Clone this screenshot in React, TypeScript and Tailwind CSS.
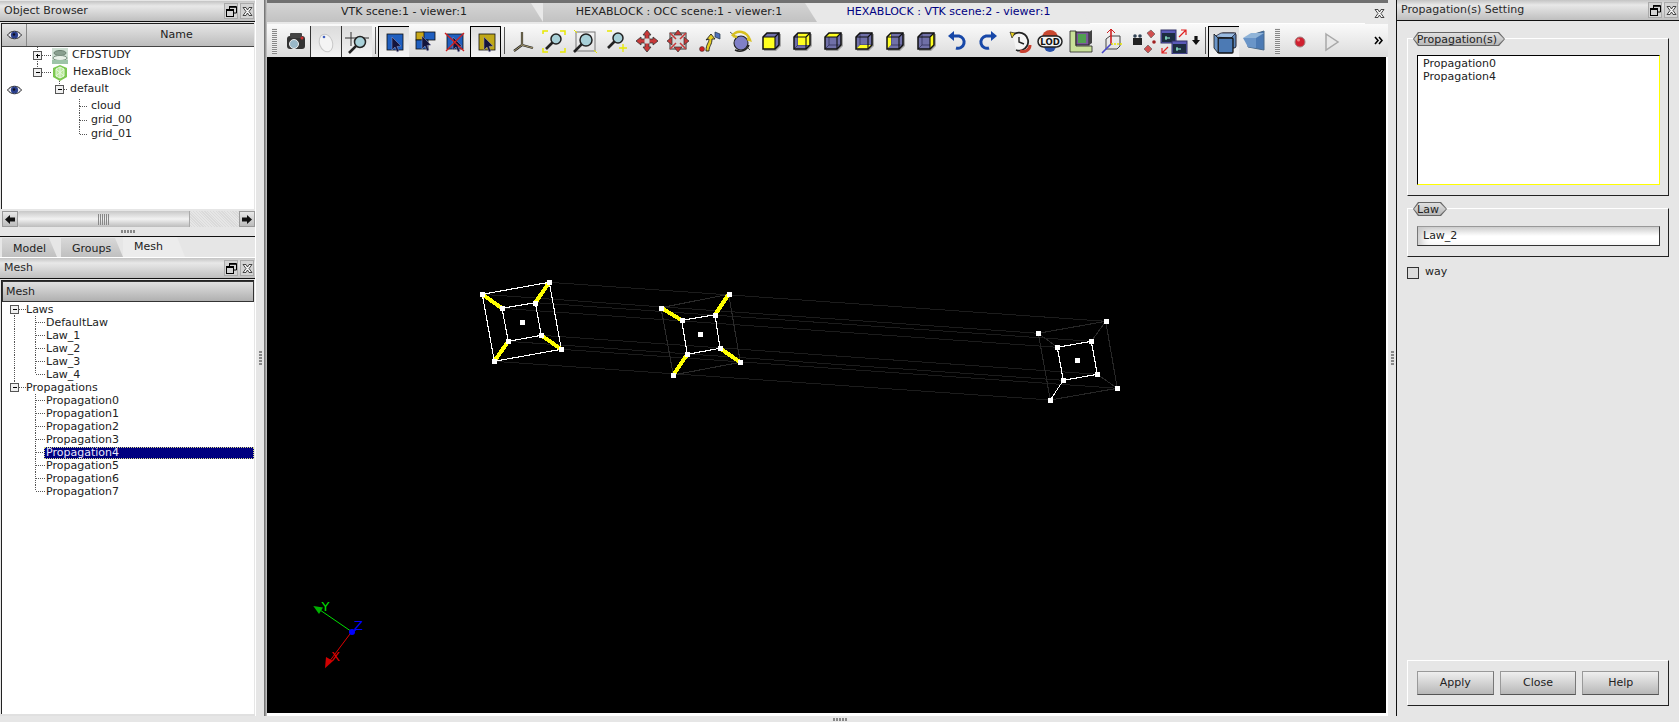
import React from "react";

const hex = "[clip-path:polygon(5px_0,calc(100%-6px)_0,100%_50%,calc(100%-6px)_100%,5px_100%,0_50%)]";

function I({ children, w = 26, h = 26 }: { children: React.ReactNode; w?: number; h?: number }) {
  return <svg width={w} height={h} viewBox={`0 0 ${w} ${h}`} className="block shrink-0">{children}</svg>;
}

const Cursor = ({ x = 11, y = 8 }: { x?: number; y?: number }) => (
  <path transform={`translate(${x} ${y})`} d="M0 0 L0 13 L3 10 L5 15 L7 14 L5 9.5 L9 9 Z" fill="#14143c" stroke="#9a9ac0" strokeWidth="0.5" />
);

const Mag = ({ x = 15, y = 10, r = 5 }: { x?: number; y?: number; r?: number }) => (
  <g>
    <line x1={x - r * 0.7} y1={y + r * 0.7} x2={x - r * 2} y2={y + r * 2} stroke="#222" strokeWidth="2.6" />
    <circle cx={x} cy={y} r={r} fill="#a8d0d8" stroke="#222" strokeWidth="1.5" />
  </g>
);

function Cube({ face }: { face: string }) {
  const Y = "#ffff20";
  const polys: Record<string, string> = {
    back: "M9 5 H21 V17 H9 Z",
    top: "M5 9 L9 5 H21 L17 9 Z",
    bottom: "M5 21 L9 17 H21 L17 21 Z",
    left: "M5 9 L9 5 V17 L5 21 Z",
    right: "M17 9 L21 5 V17 L17 21 Z",
    front: "M5 9 H17 V21 H5 Z",
  };
  return (
    <I>
      <path d="M10 6 H23 V18 L18 23 H6 V11 Z" fill="#555" opacity="0.45" />
      <path d="M5 9 L9 5 H21 V17 L17 21 H5 Z" fill="#7070a8" />
      {face !== "front" && <path d="M9 5 V17 H21 M9 17 L5 21" fill="none" stroke="#2a2a50" strokeWidth="0.7" />}
      <path d={polys[face]} fill={Y} />
      <path d="M5 9 H17 V21 M17 9 L21 5" fill="none" stroke="#111" strokeWidth="1.1" />
      <path d="M5 9 L9 5 H21 V17 L17 21 H5 Z" fill="none" stroke="#111" strokeWidth="1.5" />
    </I>
  );
}

const icons: Record<string, React.ReactNode> = {
  camera: (
    <I>
      <rect x="4" y="8" width="18" height="13" rx="3" fill="#333" />
      <rect x="7" y="5" width="12" height="5" rx="1" fill="#444" />
      <circle cx="11" cy="16" r="4.5" fill="#9ab8c8" stroke="#eee" />
      <circle cx="19" cy="10" r="1.5" fill="#d03030" />
    </I>
  ),
  mouse: (
    <I>
      <ellipse cx="13" cy="14" rx="6.5" ry="9" transform="rotate(-20 13 14)" fill="#f4f4f4" stroke="#c8c8c8" />
      <circle cx="11" cy="8" r="1.3" fill="#4060c0" />
    </I>
  ),
  axisZoom: (
    <I w={30}>
      <line x1="3" y1="9" x2="27" y2="9" stroke="#333" />
      <line x1="9" y1="3" x2="9" y2="17" stroke="#333" />
      <Mag x={18} y={13} r={5.5} />
    </I>
  ),
  sel: (
    <I>
      <rect x="6" y="5" width="16" height="16" fill="#1f5fc0" stroke="#111" strokeWidth="0.8" />
      <Cursor x={11} y={8} />
    </I>
  ),
  selMulti: (
    <I>
      <rect x="12" y="4" width="12" height="8" fill="#1f5fc0" stroke="#111" strokeWidth="0.8" />
      <rect x="5" y="4" width="8" height="8" fill="#c8a818" stroke="#111" strokeWidth="0.8" />
      <rect x="5" y="12" width="12" height="9" fill="#1f5fc0" stroke="#111" strokeWidth="0.8" />
      <Cursor x={11} y={8} />
    </I>
  ),
  selX: (
    <I>
      <rect x="5" y="6" width="16" height="15" fill="#1f5fc0" stroke="#111" strokeWidth="0.8" />
      <Cursor x={11} y={9} />
      <path d="M3 5 L22 23 M22 5 L4 23" stroke="#d02020" strokeWidth="1.4" />
    </I>
  ),
  selY: (
    <I>
      <rect x="6" y="5" width="16" height="16" fill="#c0a818" stroke="#111" strokeWidth="0.8" />
      <Cursor x={11} y={8} />
    </I>
  ),
  axes: (
    <I>
      <path d="M12 4 L12 17 L23 20 M12 17 L4 23" fill="none" stroke="#222" strokeWidth="2.2" />
      <path d="M12 4 L12 17 L23 20 M12 17 L4 23" fill="none" stroke="#c8b880" strokeWidth="0.8" />
    </I>
  ),
  zoomFrame: (
    <I>
      <path d="M2 6 V3 H7 M19 3 H24 V7 M2 20 V24 H7 M19 24 H24 V20" fill="none" stroke="#e8e800" strokeWidth="1.5" />
      <Mag x={15} y={11} r={5} />
    </I>
  ),
  fitArea: (
    <I>
      <rect x="4" y="4" width="19" height="19" fill="none" stroke="#777" />
      <Mag x={14} y={12} r={6} />
      <path d="M2 2 L5 5 M22 22 L25 25" stroke="#e8e800" />
    </I>
  ),
  zoomIn: (
    <I>
      <path d="M4 3 H9" stroke="#e8e800" strokeWidth="1.5" />
      <Mag x={15} y={10} r={5} />
      <path d="M16 20 H24 M20 16 V24" stroke="#e8e800" strokeWidth="1.3" />
    </I>
  ),
  pan: (
    <I>
      <path d="M13 2 L17 7 H15 V11 H19 V9 L24 13 L19 17 V15 H15 V19 H17 L13 24 L9 19 H11 V15 H7 V17 L2 13 L7 9 V11 H11 V7 H9 Z" fill="#c83838" stroke="#333" strokeWidth="0.8" />
      <rect x="10.5" y="10.5" width="5" height="5" fill="#d8d8d8" />
    </I>
  ),
  globalPan: (
    <I>
      <rect x="5" y="5" width="16" height="16" fill="#d8d8d8" stroke="#333" />
      <path d="M13 2 L17 7 H9 Z M13 24 L9 19 H17 Z M2 13 L7 9 V17 Z M24 13 L19 9 V17 Z" fill="#c83838" stroke="#333" strokeWidth="0.7" />
      <path d="M11 11 L5 5 M15 15 L21 21 M15 11 L21 5 M11 15 L5 21" stroke="#c83838" strokeWidth="1.5" />
    </I>
  ),
  rotPoint: (
    <I>
      <circle cx="6" cy="21" r="2.5" fill="#d02020" stroke="#333" strokeWidth="0.5" />
      <path d="M10 23 C10 16 13 15 13 11 L10 12 L15 6 L19 11 L16 11 C16 17 13 18 13 23 Z" fill="#e8d020" stroke="#222" strokeWidth="0.9" />
      <path d="M19 4 L24 6 L24 11 L19 9 Z" fill="#5070b8" stroke="#234" strokeWidth="0.7" />
    </I>
  ),
  rotate: (
    <I>
      <path d="M3 4 L8 8 M23 22 L19 18" stroke="#333" strokeWidth="0.8" />
      <circle cx="14" cy="15" r="7" fill="#8080c8" stroke="#222" strokeWidth="1.1" />
      <path d="M5 8 C10 1 20 3 23 12 L20 11 M6 8 L10 9" fill="none" stroke="#d8c020" strokeWidth="2.4" />
      <path d="M8 22 C14 25 20 22 22 17" fill="none" stroke="#222" strokeWidth="1.5" />
    </I>
  ),
  undo: (
    <I>
      <path d="M8 8 H15 A6.2 6.2 0 1 1 12 20" fill="none" stroke="#1848a8" strokeWidth="3" />
      <path d="M4 8 L10 3 V13 Z" fill="#1848a8" />
    </I>
  ),
  redo: (
    <I>
      <path d="M18 8 H11 A6.2 6.2 0 1 0 14 20" fill="none" stroke="#1848a8" strokeWidth="3" />
      <path d="M22 8 L16 3 V13 Z" fill="#1848a8" />
    </I>
  ),
  clock: (
    <I>
      <path d="M7 7 A9 9 0 1 1 10 22" fill="#f4f4f4" stroke="#222" strokeWidth="1.8" />
      <path d="M4 4 L9 5 L6 10 Z" fill="#e8d020" stroke="#222" strokeWidth="0.7" />
      <path d="M13 9 V14 L18 16" fill="none" stroke="#222" strokeWidth="1.4" />
      <path d="M14 23 C20 25 24 21 24 17" fill="none" stroke="#c84030" strokeWidth="3" />
    </I>
  ),
  lod: (
    <I w={30}>
      <circle cx="15" cy="10" r="8" fill="#c84830" />
      <circle cx="15" cy="18" r="6" fill="#2850a8" />
      <rect x="3" y="8" width="24" height="11" rx="5.5" fill="#f4f4f4" stroke="#222" strokeWidth="1.5" />
      <text x="15" y="17" textAnchor="middle" fontSize="8.5" fontWeight="700" fontFamily="'DejaVu Sans',sans-serif" fill="#111">LOD</text>
    </I>
  ),
  book: (
    <I>
      <path d="M2 3 H8 V18 H24 V24 H2 Z" fill="#c8e098" stroke="#222" strokeWidth="0.8" />
      <rect x="8" y="4" width="13" height="13" fill="#7a5a98" stroke="#222" />
      <rect x="10" y="6" width="8" height="9" fill="#50a050" />
      <path d="M21 4 L24 2 V15 L21 17 Z" fill="#444" />
    </I>
  ),
  clip: (
    <I>
      <path d="M7 11 L11 8 H21 V18 L18 21 H7 Z" fill="none" stroke="#444" />
      <path d="M12 1 V17" stroke="#d02020" strokeWidth="1.6" />
      <path d="M8 5 L12 1 L16 5" fill="none" stroke="#d02020" />
      <path d="M12 16 H24" stroke="#e8e800" strokeWidth="1.5" strokeDasharray="2 1" />
      <path d="M12 16 L3 25" stroke="#4848c8" strokeWidth="1.6" />
    </I>
  ),
  camView: (
    <I>
      <rect x="3" y="10" width="9" height="7" fill="#222" />
      <circle cx="5" cy="8" r="1.8" fill="#345" />
      <circle cx="10" cy="8" r="1.8" fill="#345" />
      <path d="M17 5 L21 2 L25 6 L21 10 Z M14 21 L18 17 L22 21 L18 25 Z" fill="#d05050" stroke="#555" strokeWidth="0.6" />
      <circle cx="24" cy="14" r="1.8" fill="#a02020" />
    </I>
  ),
  windows: (
    <I w={30}>
      <rect x="2" y="2" width="15" height="13" fill="#5a5ab8" stroke="#336" />
      <rect x="3" y="5" width="13" height="9" fill="#1c2c40" />
      <rect x="13" y="13" width="15" height="13" fill="#5a5ab8" stroke="#336" />
      <rect x="14" y="16" width="13" height="9" fill="#1c2c40" />
      <path d="M6 10 H11 M7 8 V12 M17 21 H22 M18 19 V23" stroke="#9fd" />
      <path d="M20 9 L27 2 M22 2 H27 V7 M3 25 L9 19 M3 20 V25 H8" fill="none" stroke="#e02020" strokeWidth="1.2" />
    </I>
  ),
  down: (
    <svg width="8" height="9" viewBox="0 0 10 11" className="block"><path d="M3 0 H7 V5 H10 L5 11 L0 5 H3 Z" fill="#111" /></svg>
  ),
  iso: (
    <I>
      <rect x="10" y="4" width="15" height="15" rx="2" fill="#5d86b8" stroke="#223" />
      <path d="M3 8 L10 4 H25 L20 9 Z" fill="#9abbe0" stroke="#223" strokeWidth="0.8" />
      <rect x="7" y="9" width="15" height="15" rx="1" fill="#4c7ab4" stroke="#111" strokeWidth="1.3" />
      <path d="M7 9 L3 5 V19 L7 24 Z" fill="#6a95c8" stroke="#111" strokeWidth="0.8" />
    </I>
  ),
  persp: (
    <I>
      <path d="M6 8 L22 3 V22 L6 19 Z" fill="#4c7ab4" stroke="#4a6a8a" />
      <path d="M1 10 L9 5 H22 L14 10 Z" fill="#90b4d8" />
      <path d="M1 10 L14 10 L14 20 L6 19 Z" fill="#6a95c8" />
    </I>
  ),
  rec: (
    <I>
      <circle cx="13" cy="14" r="5" fill="#d02030" stroke="#a08080" />
      <circle cx="11.5" cy="12" r="1.5" fill="#f08080" />
    </I>
  ),
  play: (
    <I>
      <path d="M8 6 L20 14 L8 22 Z" fill="#e8e8e8" stroke="#a8a8a8" strokeWidth="1.5" />
    </I>
  ),
};

function Btn({ icon, w = "w-[31px]", on }: { icon: React.ReactNode; w?: string; on?: string }) {
  return (
    <div className={`flex ${w} shrink-0 items-center justify-center ${on ? `self-end h-[31px] ${on}` : "h-[33px]"}`}>
      {icon}
    </div>
  );
}

const soft = "border-l border-[#333] bg-linear-to-b from-[#dcdcdc] to-[#f2f2f2]";
const topLeft = "border-t border-l border-black bg-linear-to-b from-[#dedede] to-[#f4f4f4]";
const boxed = "border-t border-l border-r border-black bg-linear-to-b from-[#dedede] to-[#f4f4f4]";

const Sep = () => (
  <div className="flex w-[6px] shrink-0 justify-center py-[3px]">
    <div className="w-px h-full bg-[#555]" />
  </div>
);

const Grip = ({ w = "w-[14px]" }: { w?: string }) => (
  <div className={`flex ${w} shrink-0 items-center justify-center`}>
    <div className="h-[26px] w-[5px] bg-[repeating-linear-gradient(0deg,#888_0_1px,#eee_1px_2px)]" />
  </div>
);

const CloseX = () => (
  <svg width="11" height="9" viewBox="0 0 11 9">
    <path d="M1 0.5 H4 L5.5 3 L7 0.5 H10 L7 4.5 L10 8.5 H7 L5.5 6 L4 8.5 H1 L4 4.5 Z" fill="#f4f4f4" stroke="#222" strokeWidth="0.8" />
  </svg>
);

function WinButtons() {
  return (
    <div className="flex gap-[2px]">
      <div className="flex h-[16px] w-[14px] items-center justify-center border border-[#aaa] bg-[#d4d4d4]">
        <svg width="11" height="11" viewBox="0 0 11 11">
          <path d="M3.5 3 V0.5 H10.5 V7 H8" fill="none" stroke="#000" />
          <path d="M3 1 H10" stroke="#000" strokeWidth="1.6" />
          <rect x="0.5" y="3.5" width="7" height="7" fill="none" stroke="#000" />
          <path d="M0 4.2 H8" stroke="#000" strokeWidth="1.6" />
        </svg>
      </div>
      <div className="flex h-[16px] w-[14px] items-center justify-center border border-[#aaa] bg-[#d4d4d4]">
        <CloseX />
      </div>
    </div>
  );
}

function TitleBar({ title }: { title: string }) {
  return (
    <div className="flex h-[20px] items-center justify-between pl-[4px] pr-px bg-linear-to-b from-[#c4c4c4] via-[#e8e8e8] via-25% to-[#bfbfbf] text-[#2a2a2a]">
      <span>{title}</span>
      <WinButtons />
    </div>
  );
}

// one tree gutter column: a drawn dotted connector
function Gut({ w, x, up = true, down = false, arm = 0, box, h = 13 }: { w: number; x: number; up?: boolean; down?: boolean; arm?: number; box?: "+" | "-"; h?: number }) {
  const c = Math.floor(h / 2);
  const d = "1 1";
  return (
    <svg width={w} height={h} viewBox={`0 0 ${w} ${h}`} className="block shrink-0" shapeRendering="crispEdges">
      {up && <line x1={x + 0.5} y1="0" x2={x + 0.5} y2={c} stroke="#555" strokeDasharray={d} />}
      {down && <line x1={x + 0.5} y1={c} x2={x + 0.5} y2={h} stroke="#555" strokeDasharray={d} />}
      {arm > 0 && <line x1={x + 1} y1={c + 0.5} x2={x + arm} y2={c + 0.5} stroke="#555" strokeDasharray={d} />}
      {box && (
        <g>
          <rect x={x - 3.5} y={c - 3.5} width="8" height="8" fill="#f0f0f0" stroke="#555" />
          <line x1={x - 1.5} y1={c + 0.5} x2={x + 2.5} y2={c + 0.5} stroke="#000" />
          {box === "+" && <line x1={x + 0.5} y1={c - 1.5} x2={x + 0.5} y2={c + 2.5} stroke="#000" />}
        </g>
      )}
    </svg>
  );
}

const Eye = () => (
  <svg width="15" height="10" viewBox="0 0 15 10" className="block">
    <path d="M0.5 5 C4 0 11 0 14.5 5 C11 10 4 10 0.5 5 Z" fill="#e8e8f0" stroke="#222" />
    <circle cx="7.5" cy="5" r="3.6" fill="#2a3f8c" />
    <circle cx="7" cy="4.5" r="1.2" fill="#101020" />
  </svg>
);

const CfdIcon = () => (
  <svg width="16" height="16" viewBox="0 0 16 16" className="block">
    <rect width="16" height="16" fill="#cfe0d4" />
    <ellipse cx="8" cy="5" rx="6" ry="2.5" fill="#8aa090" stroke="#6a8070" />
    <ellipse cx="8" cy="10" rx="7" ry="2.5" fill="#e8f0e8" stroke="#7a9080" />
    <rect x="0" y="12" width="16" height="4" fill="#9ec4a8" />
  </svg>
);

const HexaIcon = () => (
  <svg width="16" height="16" viewBox="0 0 16 16" className="block">
    <path d="M8 0 L15 3 V12 L8 16 L1 12 V3 Z" fill="#7cc850" />
    <path d="M4 4 L8 2 L12 4 V11 L8 13 L4 11 Z M8 2 V13 M4 4 L12 11 M12 4 L4 11" fill="#b8e898" stroke="#e8f8e0" strokeWidth="1" />
  </svg>
);

function ObjectTree() {
  return (
    <div className="flex-1 overflow-hidden bg-white">
      <div className="flex h-[17px] items-center">
        <div className="w-[25px]" />
        <Gut w={25} x={10} up down arm={16} box="+" h={17} />
        <CfdIcon />
        <span className="ml-[4px]">CFDSTUDY</span>
      </div>
      <div className="flex h-[17px] items-center">
        <div className="w-[25px]" />
        <Gut w={25} x={10} up arm={16} box="-" h={17} />
        <HexaIcon />
        <span className="ml-[5px]">HexaBlock</span>
      </div>
      <div className="flex h-[17px] items-center">
        <div className="flex w-[25px] justify-center pr-[1px]"><Eye /></div>
        <Gut w={42} x={32} arm={9} box="-" h={17} />
        <span className="ml-[1px]">default</span>
      </div>
      <div className="h-px" />
      {["cloud", "grid_00", "grid_01"].map((t, i) => (
        <div key={t} className="flex h-[14px] items-center">
          <div className="w-[50px]" />
          <Gut w={37} x={27} up down={i < 2} arm={9} h={14} />
          <span className="ml-[2px]">{t}</span>
        </div>
      ))}
    </div>
  );
}

function HScroll() {
  return (
    <div className="flex h-[16px] items-stretch pl-[1px]">
      <div className="flex w-[16px] items-center justify-center border border-[#999] bg-linear-to-b from-[#e8e8e8] to-[#bcbcbc]">
        <svg width="10" height="9" viewBox="0 0 10 9"><path d="M0 4.5 L5 0 V2.5 H10 V6.5 H5 V9 Z" fill="#111" /></svg>
      </div>
      <div className="flex w-[172px] items-center justify-center rounded-l-[2px] border-r border-[#aaa] bg-linear-to-b from-[#c8c8c8] via-[#f2f2f2] to-[#bcbcbc]">
        <div className="h-[11px] w-[11px] bg-[repeating-linear-gradient(90deg,#888_0_1px,transparent_1px_2px)]" />
      </div>
      <div className="flex-1 bg-[repeating-linear-gradient(45deg,#e6e6e6_0_1px,#dadada_1px_2px)]" />
      <div className="flex w-[16px] items-center justify-center border border-[#999] bg-linear-to-b from-[#e8e8e8] to-[#bcbcbc]">
        <svg width="10" height="9" viewBox="0 0 10 9"><path d="M10 4.5 L5 0 V2.5 H0 V6.5 H5 V9 Z" fill="#111" /></svg>
      </div>
    </div>
  );
}

function LeftTab({ label, active, w }: { label: string; active?: boolean; w: string }) {
  return (
    <div className={`flex ${w} items-center pl-[11px] ${active ? "h-[20px] bg-[#ececec]" : "mt-px h-[19px] bg-linear-to-b from-[#d8d8d8] to-[#c0c0c0] pt-[3px]"} [clip-path:polygon(0_0,calc(100%-8px)_0,100%_100%,0_100%)]`}>
      {label}
    </div>
  );
}

function MeshTree() {
  const laws = ["DefaultLaw", "Law_1", "Law_2", "Law_3", "Law_4"];
  const props = ["Propagation0", "Propagation1", "Propagation2", "Propagation3", "Propagation4", "Propagation5", "Propagation6", "Propagation7"];
  return (
    <div className="flex-1 overflow-hidden bg-white pt-px leading-[12px]">
      <div className="flex h-[13px] items-center">
        <div className="w-[6px]" />
        <Gut w={18} x={6} up={false} down arm={12} box="-" />
        <span>Laws</span>
      </div>
      {laws.map((t, i) => (
        <div key={t} className="flex h-[13px] items-center">
          <div className="w-[6px]" />
          <Gut w={26} x={6} up down />
          <Gut w={12} x={1} down={i < laws.length - 1} arm={10} />
          <span>{t}</span>
        </div>
      ))}
      <div className="flex h-[13px] items-center">
        <div className="w-[6px]" />
        <Gut w={18} x={6} arm={12} box="-" />
        <span>Propagations</span>
      </div>
      {props.map((t, i) => (
        <div key={t} className="flex h-[13px] items-center">
          <div className="w-[32px]" />
          <Gut w={12} x={1} down={i < props.length - 1} arm={10} />
          <span className={`-ml-[2px] flex-1 pl-[2px] ${t === "Propagation4" ? "bg-[#000080] text-[#e8e8ff] outline-1 -outline-offset-1 outline-dotted outline-[#dddd88]" : ""}`}>{t}</span>
        </div>
      ))}
    </div>
  );
}

function Left() {
  return (
    <div className="flex w-[255px] shrink-0 flex-col">
      <div className="h-[1px]" />
      <TitleBar title="Object Browser" />
      <div className="h-px bg-[#111]" />
      <div className="mt-[1px] ml-px mr-[1px] flex h-[186px] flex-col border-t border-l border-[#222]">
        <div className="flex h-[23px] border-b border-[#444] bg-linear-to-b from-[#e6e6e6] to-[#bdbdbd]">
          <div className="flex w-[25px] items-center justify-center border-r border-[#888]"><Eye /></div>
          <div className="flex-1 pl-[72px] text-center leading-[22px]">Name</div>
        </div>
        <ObjectTree />
      </div>
      <div className="mt-[2px] ml-px"><HScroll /></div>
      <div className="flex h-[10px] items-center justify-center border-b border-[#111]">
        <div className="h-[3px] w-[14px] bg-[repeating-linear-gradient(90deg,#888_0_2px,transparent_2px_3px)]" />
      </div>
      <div className="flex h-[21px] gap-[4px] border-b border-white pl-[2px]">
        <LeftTab label="Model" w="w-[55px]" />
        <LeftTab label="Groups" w="w-[62px]" />
        <div className="-ml-[4px]"><LeftTab label="Mesh" active w="w-[62px]" /></div>
      </div>
      <TitleBar title="Mesh" />
      <div className="h-px bg-[#111]" />
      <div className="mt-[1px] ml-px mr-[1px] flex flex-1 flex-col border-t border-l border-[#222]">
        <div className="flex h-[21px] items-center border border-[#333] bg-linear-to-b from-[#e0e0e0] to-[#b0b0b0] pl-[3px] pt-px">Mesh</div>
        <MeshTree />
      </div>
      <div className="h-[2px] bg-[#e0e0e0]" />
    </div>
  );
}

function CenterTab({ label, w, active }: { label: string; w: string; active?: boolean }) {
  return (
    <div className={`flex ${w} shrink-0 items-center justify-center ${active ? "h-[21px] bg-[#e8e8e8] pr-[10px] pb-[3px] text-[#000080]" : "mb-[2px] h-[19px] self-end bg-linear-to-b from-[#d4d4d4] to-[#c2c2c2] pr-[2px] text-[#222]"} [clip-path:polygon(0_0,calc(100%-12px)_0,100%_100%,0_100%)]`}>
      {label}
    </div>
  );
}

const toolbar1 = ["axes", "zoomFrame", "fitArea", "zoomIn", "pan", "globalPan", "rotPoint", "rotate"];
const faces = ["front", "back", "top", "bottom", "left", "right"];
const toolbar2 = ["undo", "redo", "clock", "lod", "book", "clip", "camView", "windows"];

function Toolbar() {
  return (
    <div className="flex h-[33px] items-stretch bg-linear-to-b from-[#fafafa] to-[#dcdcdc]">
      <Grip />
      <Btn icon={icons.camera} w="w-[29px]" />
      <Btn icon={icons.mouse} on={soft} />
      <Btn icon={icons.axisZoom} on={soft} />
      <Sep />
      <Btn icon={icons.sel} on={topLeft} />
      <Btn icon={icons.selMulti} w="w-[30px]" />
      <Btn icon={icons.selX} />
      <Btn icon={icons.selY} on={boxed} />
      <Sep />
      {toolbar1.map((k) => <Btn key={k} icon={icons[k]} />)}
      {faces.map((f) => <Btn key={f} icon={<Cube face={f} />} />)}
      {toolbar2.map((k) => <Btn key={k} icon={icons[k]} />)}
      <Btn icon={icons.down} w="w-[13px]" />
      <Sep />
      <Btn icon={icons.iso} on={topLeft} />
      <Btn icon={icons.persp} />
      <Grip w="w-[14px]" />
      <Btn icon={icons.rec} />
      <Btn icon={icons.play} />
      <div className="flex flex-1 items-center justify-end pr-[5px]">
        <svg width="9" height="9" viewBox="0 0 9 9"><path d="M1 1 L4 4.5 L1 8 M5 1 L8 4.5 L5 8" fill="none" stroke="#000" strokeWidth="1.6" /></svg>
      </div>
    </div>
  );
}

function Scene() {
  type P = [number, number];
  const A: P[] = [[482.3, 294.3], [549.3, 282.3], [561.3, 349.3], [494.3, 361.3]];
  const Ai: P[] = [[502, 308.3], [535.3, 302.7], [541.3, 335.3], [508.3, 341.3]];
  const B: P[] = [[661, 307.7], [728.7, 294.3], [740.3, 362.3], [673.3, 375]];
  const Bi: P[] = [[681.7, 320.3], [715, 314.7], [720, 348.3], [687.3, 354.3]];
  const C: P[] = [[1038.3, 333.3], [1105.7, 321.3], [1117.3, 388.3], [1050.3, 400]];
  const Ci: P[] = [[1057.3, 347.3], [1091.3, 341.3], [1097.3, 374.3], [1063.3, 380.3]];
  const ln = (p: P, q: P, c: string, w = 1, k?: string) => <line key={k} x1={p[0]} y1={p[1]} x2={q[0]} y2={q[1]} stroke={c} strokeWidth={w} />;
  const loop = (s: P[], c: string) => s.map((p, i) => ln(p, s[(i + 1) % 4], c, 1.1, `${p[0]}-${i}`));
  const nodes = [...A, ...Ai, ...B, ...Bi, ...C, ...Ci];
  const centers: P[] = [[522.3, 322.3], [700.3, 334.3], [1077.3, 360.3]];
  const faint = "#1c1c1c";
  return (
    <svg viewBox="267 57 1119 656" className="block h-full w-full" shapeRendering="crispEdges">
      {[0, 1, 2, 3].map((i) => (
        <g key={i}>
          {ln(A[i], C[i], faint, 1, `a${i}`)}
          {ln(Ai[i], Ci[i], faint, 1, `b${i}`)}
          {ln(C[i], Ci[i], i === 3 ? "#ffffff" : "#2a2a2a", 1, `e${i}`)}
        </g>
      ))}
      {loop(A, "#fff")}
      {loop(Ai, "#fff")}
      {loop(B, "#2a2a2a")}
      {loop(Bi, "#fff")}
      {loop(C, "#262626")}
      {loop(Ci, "#fff")}
      {[0, 1, 2, 3].map((i) => ln(A[i], Ai[i], "#ffff00", 4, `y${i}`))}
      {[0, 1, 2, 3].map((i) => ln(B[i], Bi[i], "#ffff00", 4, `z${i}`))}
      {nodes.map((p, i) => <rect key={i} x={Math.round(p[0]) - 2} y={Math.round(p[1]) - 2} width="5" height="5" fill="#fff" />)}
      {centers.map((p, i) => <rect key={i} x={Math.round(p[0]) - 2} y={Math.round(p[1]) - 2} width="5" height="5" fill="#fff" />)}
      <g shapeRendering="auto">
        <line x1="351.7" y1="631.7" x2="320" y2="610" stroke="#00e000" strokeWidth="1" />
        <path d="M313.3 606 L323 607.5 L319 614 Z" fill="#00b000" />
        <line x1="351.7" y1="631.7" x2="329" y2="662" stroke="#e00000" strokeWidth="1" />
        <path d="M325 668.3 L326 657 L333 661 Z" fill="#d00000" />
        <line x1="351.7" y1="631.7" x2="356" y2="630" stroke="#0000ff" strokeWidth="1" />
        <circle cx="352" cy="632" r="3" fill="#0000ff" />
        <text x="321.5" y="611" fill="#00e000" fontSize="13" fontFamily="'DejaVu Sans',sans-serif">Y</text>
        <text x="331" y="661" fill="#e00000" fontSize="13" fontFamily="'DejaVu Sans',sans-serif">X</text>
        <text x="354" y="630" fill="#0000ff" fontSize="13" fontFamily="'DejaVu Sans',sans-serif">Z</text>
      </g>
    </svg>
  );
}

function Center() {
  return (
    <div className="flex w-[1121px] shrink-0 flex-col">
      <div className="h-[3px] bg-[#707070]" />
      <div className="flex h-[21px] items-start bg-[#e8e8e8]">
        <CenterTab label="VTK scene:1 - viewer:1" w="w-[276px]" />
        <CenterTab label="HEXABLOCK : OCC scene:1 - viewer:1" w="w-[274px]" />
        <CenterTab label="HEXABLOCK : VTK scene:2 - viewer:1" w="w-[273px]" active />
        <div className="flex h-full flex-1 flex-col">
          <div className="flex h-[20px] items-center justify-end pr-[3px]"><CloseX /></div>
          <div className="h-px w-[275px] bg-white" />
        </div>
      </div>
      <Toolbar />
      <div className="flex-1 border-r-2 border-white bg-black"><Scene /></div>
      <div className="h-[3px] bg-white" />
    </div>
  );
}

function Group({ label, pill, className, children }: { label?: string; pill?: string; className: string; children: React.ReactNode }) {
  return (
    <div className={`relative border border-t-white border-r-[#222] border-b-[#222] border-l-white ${className}`}>
      {label && (
        <div className={`absolute -top-[7px] left-[5px] ${pill} h-[14px] bg-[#666] p-px ${hex}`}>
          <div className={`flex h-full w-full items-center justify-center bg-linear-to-b from-[#e0e0e0] to-[#b8b8b8] pr-[4px] leading-none ${hex}`}>{label}</div>
        </div>
      )}
      {children}
    </div>
  );
}

function Right() {
  return (
    <div className="flex h-[716px] w-[283px] shrink-0 flex-col border-l border-[#111]">
      <TitleBar title="Propagation(s) Setting" />
      <div className="h-px bg-[#111]" />
      <div className="flex flex-1 flex-col px-[10px] pt-[17px] pb-[10px]">
        <Group label="Propagation(s)" pill="w-[92px]" className="h-[158px] px-[9px] pt-[16px]">
          <div className="h-[130px] w-[243px] border border-t-black border-r-[#ffff00] border-b-[#ffff00] border-l-black bg-white pt-[1px] pl-[5px] leading-[13px]">
            <div>Propagation0</div>
            <div>Propagation4</div>
          </div>
        </Group>
        <Group label="Law" pill="w-[34px]" className="mt-[12px] h-[49px] px-[9px] pt-[17px]">
          <div className="flex h-[20px] w-[243px] items-center border border-t-[#999] border-r-[#333] border-b-[#333] border-l-[#777] bg-linear-to-b from-[#cfcfcf] to-white to-50% pl-[5px] shadow-[inset_8px_0_8px_-4px_#c8c8c8]">Law_2</div>
        </Group>
        <div className="mt-[9px] flex h-[13px] items-center gap-[6px]">
          <div className="h-[12px] w-[12px] border border-[#333] bg-[#dcdcdc]" />
          <span>way</span>
        </div>
        <div className="flex-1" />
        <Group className="flex h-[46px] items-center gap-[6px] px-[9px]">
          {["Apply", "Close", "Help"].map((t) => (
            <div key={t} className="flex h-[24px] w-[77px] items-center justify-center border border-[#999] border-r-[#777] border-b-[#555] bg-linear-to-b from-[#efefef] to-[#b8b8b8] pt-px">{t}</div>
          ))}
        </Group>
      </div>
    </div>
  );
}

export default function App() {
  return (
    <div className="flex h-[722px] w-[1679px] flex-col overflow-hidden bg-[#e6e6e6] font-['DejaVu_Sans',sans-serif] text-[11px] text-[#222]">
      <div className="flex h-[716px]">
        <Left />
        <div className="flex w-[12px] shrink-0 items-center">
          <div className="flex h-full w-[9px] items-center justify-center border-l border-white">
            <div className="h-[14px] w-[3px] bg-[repeating-linear-gradient(0deg,#888_0_2px,transparent_2px_3px)]" />
          </div>
          <div className="h-full w-[3px] bg-linear-to-r from-[#666] to-[#d0d0d0]" />
        </div>
        <Center />
        <div className="flex w-[8px] shrink-0 items-center justify-center">
          <div className="h-[14px] w-[3px] bg-[repeating-linear-gradient(0deg,#888_0_2px,transparent_2px_3px)]" />
        </div>
        <Right />
      </div>
      <div className="flex h-[6px] items-end justify-center pb-px">
        <div className="h-[3px] w-[14px] bg-[repeating-linear-gradient(90deg,#888_0_2px,transparent_2px_3px)]" />
      </div>
    </div>
  );
}
